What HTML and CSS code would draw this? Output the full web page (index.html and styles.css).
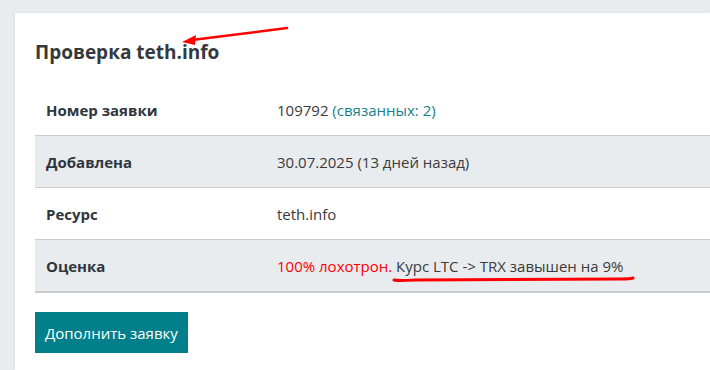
FILE: index.html
```html
<!DOCTYPE html>
<html lang="ru">
<head>
  <meta charset="UTF-8" />
  <title>Проверка teth.info</title>
  <link rel="stylesheet" href="styles.css">
</head>
<body>

  <div class="card">
    <h2 class="card-title">Проверка teth.info</h2>
    <table class="info-table">
      <tr>
        <th>Номер заявки</th>
        <td>109792 <a href="#" class="link">(связанных: 2)</a></td>
      </tr>
      <tr class="shaded">
        <th>Добавлена</th>
        <td>30.07.2025 (13 дней назад)</td>
      </tr>
      <tr>
        <th>Ресурс</th>
        <td>teth.info</td>
      </tr>
      <tr class="shaded">
        <th>Оценка</th>
        <td><span class="danger">100% лохотрон.</span> Курс LTC -&gt; TRX завышен на 9%</td>
      </tr>
    </table>
    <button class="btn">Дополнить заявку</button>
  </div>

  <!-- red annotation marks drawn over the screenshot -->
  <svg class="marks" width="710" height="370" viewBox="0 0 710 370">
    <path d="M287 28 L192 40" stroke="#f00" stroke-width="2.5" stroke-linecap="round" fill="none"/>
    <path d="M182 42 L196 35 L195 45 Z" fill="#f00"/>
    <path d="M394 280 Q398 281 415 280 L620 279 Q630 279 633 278" stroke="#f00" stroke-width="3" stroke-linecap="round" fill="none"/>
  </svg>

</body>
</html>
```

FILE: styles.css
```css
body {
  margin: 0;
  background: #e9ecef;
  font-family: "Open Sans", Arial, sans-serif;
  color: #333;
  padding: 13px 0 0 15px;
  height: 100vh;
  box-sizing: border-box;
  overflow: hidden;
  display: flex;
  flex-direction: column;
}

.card {
  flex: 1;
  background: #fff;
  padding: 26px 0 0 20px;
  box-shadow: -1px 0 3px rgba(0,0,0,0.06);
}

.card-title {
  margin: 0 0 19px 0;
  font-size: 19px;
  font-weight: 700;
  color: #34393e;
  line-height: 26px;
}

.info-table {
  width: 100%;
  border-collapse: collapse;
  font-size: 15px;
}

.info-table th,
.info-table td {
  height: 51px;
  padding: 0 11px;
  text-align: left;
  vertical-align: middle;
}

.info-table th {
  width: 209px;
  font-weight: 700;
  color: #2f363d;
}

.info-table td {
  color: #3a3a3a;
}

.info-table tr + tr th,
.info-table tr + tr td {
  border-top: 1px solid #c9cccf;
}

.info-table tr:last-child th,
.info-table tr:last-child td {
  border-bottom: 2px solid #c9cccf;
}

.shaded {
  background: #e9ecef;
}

.link {
  color: #17818b;
  text-decoration: none;
}

.danger {
  color: #f00;
}

.btn {
  margin-top: 19px;
  padding: 0 10px;
  height: 41px;
  background: #017f8a;
  color: #fff;
  border: none;
  font-family: "Open Sans", Arial, sans-serif;
  font-size: 15px;
  cursor: pointer;
}

.marks {
  position: absolute;
  left: 0;
  top: 0;
  pointer-events: none;
}
```
